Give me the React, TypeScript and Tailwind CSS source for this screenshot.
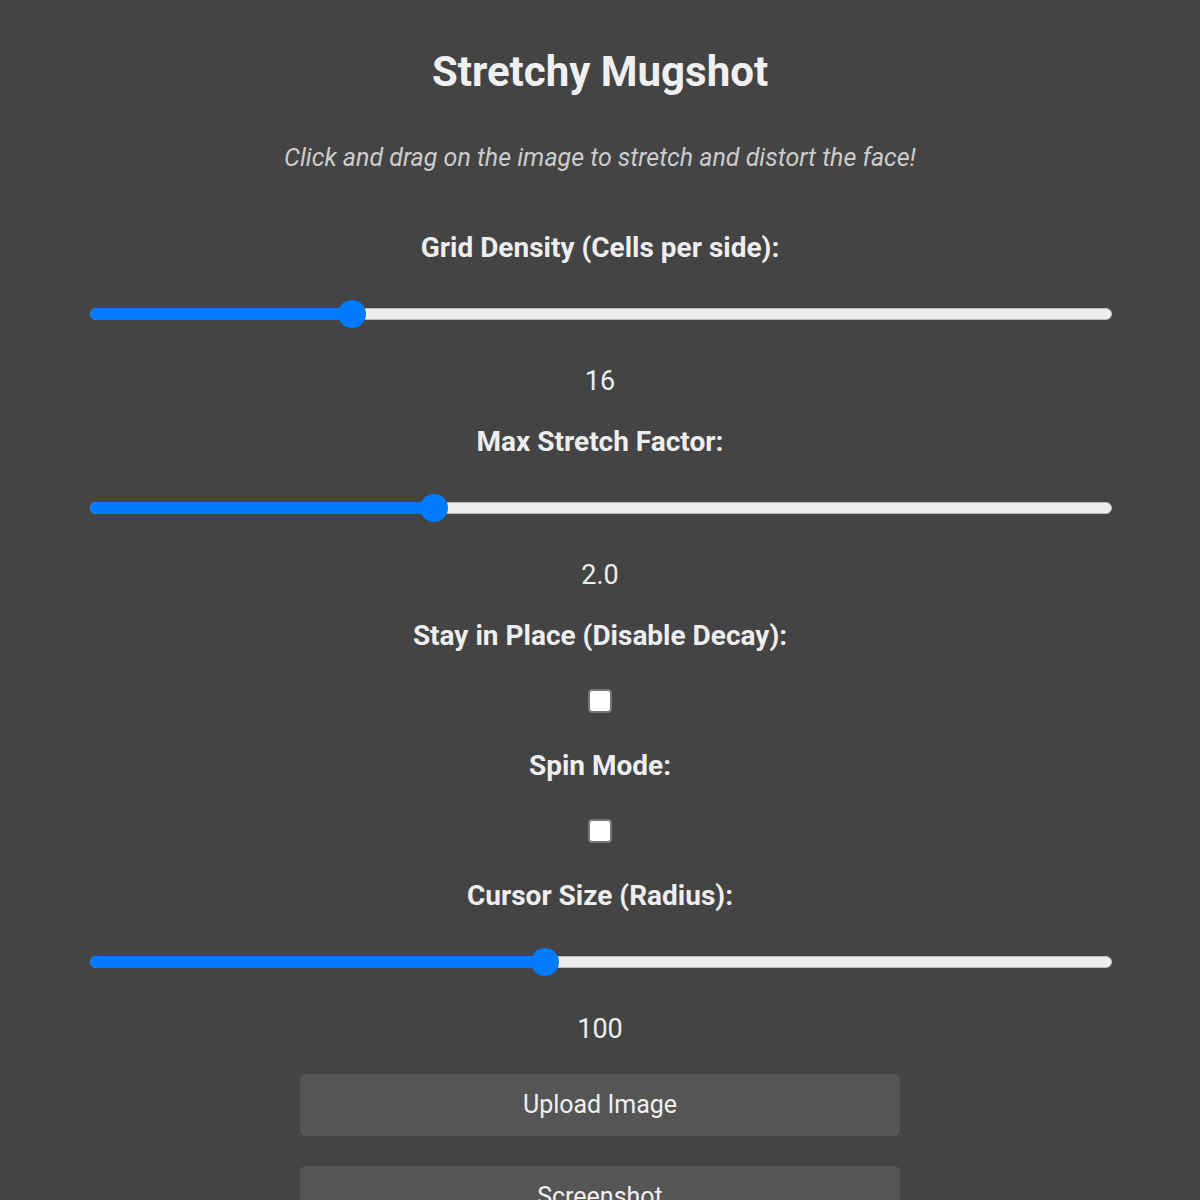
const font = { fontFamily: "Roboto, 'Noto Sans', sans-serif" };

function Slider({ value, min, max }: { value: number; min: number; max: number }) {
  const pct = (value - min) / (max - min);
  return (
    <div className="relative ml-[90px] mr-[88px] h-[28px]">
      <div className="absolute left-0 right-0 top-[8px] h-[12px] rounded-full bg-[#eeeeee] border border-[#bbbbbb]" />
      <div
        className="absolute left-0 top-[8px] h-[12px] rounded-l-full bg-[#007bff]"
        style={{ width: `calc(13px + (100% - 28px) * ${pct})` }}
      />
      <div
        className="absolute top-0 h-[28px] w-[28px] rounded-full bg-[#007bff]"
        style={{ left: `calc((100% - 28px) * ${pct} - 1px)` }}
      />
    </div>
  );
}

function Label({ children, className = "" }: { children: React.ReactNode; className?: string }) {
  return (
    <div className={`h-[36px] leading-[36px] text-center text-[28px] font-bold text-[#eeeeee] ${className}`}>
      {children}
    </div>
  );
}

function Value({ children }: { children: React.ReactNode }) {
  return <div className="mt-[35px] h-[36px] leading-[36px] text-center text-[27px] text-[#eeeeee]">{children}</div>;
}

function Checkbox() {
  return (
    <div className="mt-[35px] flex justify-center">
      <div className="h-[24px] w-[24px] rounded-[4px] bg-white border-2 border-[#767676]" />
    </div>
  );
}

export default function App() {
  return (
    <div className="h-[1200px] overflow-hidden bg-[#444444]" style={font}>
      <h1 className="pt-[48px] h-[96px] leading-[48px] text-center text-[42px] font-bold text-[#f0f0f0]">
        Stretchy Mugshot
      </h1>
      <p className="mt-[44px] h-[36px] leading-[36px] text-center text-[25px] italic text-[#cccccc]">
        Click and drag on the image to stretch and distort the face!
      </p>

      <Label className="mt-[54px]">Grid Density (Cells per side):</Label>
      <div className="mt-[34px]">
        <Slider value={16} min={4} max={52} />
      </div>
      <Value>16</Value>

      <Label className="mt-[25px]">Max Stretch Factor:</Label>
      <div className="mt-[34px]">
        <Slider value={2} min={1} max={4} />
      </div>
      <Value>2.0</Value>

      <Label className="mt-[25px]">Stay in Place (Disable Decay):</Label>
      <Checkbox />

      <Label className="mt-[35px]">Spin Mode:</Label>
      <Checkbox />

      <Label className="mt-[35px]">Cursor Size (Radius):</Label>
      <div className="mt-[34px]">
        <Slider value={100} min={20} max={200} />
      </div>
      <Value>100</Value>

      <div className="mt-[27px] flex flex-col items-center gap-[30px]">
        <button className="h-[62px] w-[600px] rounded-[6px] bg-[#555555] text-[25px] text-[#f0f0f0]">
          Upload Image
        </button>
        <button className="h-[62px] w-[600px] rounded-[6px] bg-[#555555] text-[25px] text-[#f0f0f0]">
          Screenshot
        </button>
      </div>
    </div>
  );
}
